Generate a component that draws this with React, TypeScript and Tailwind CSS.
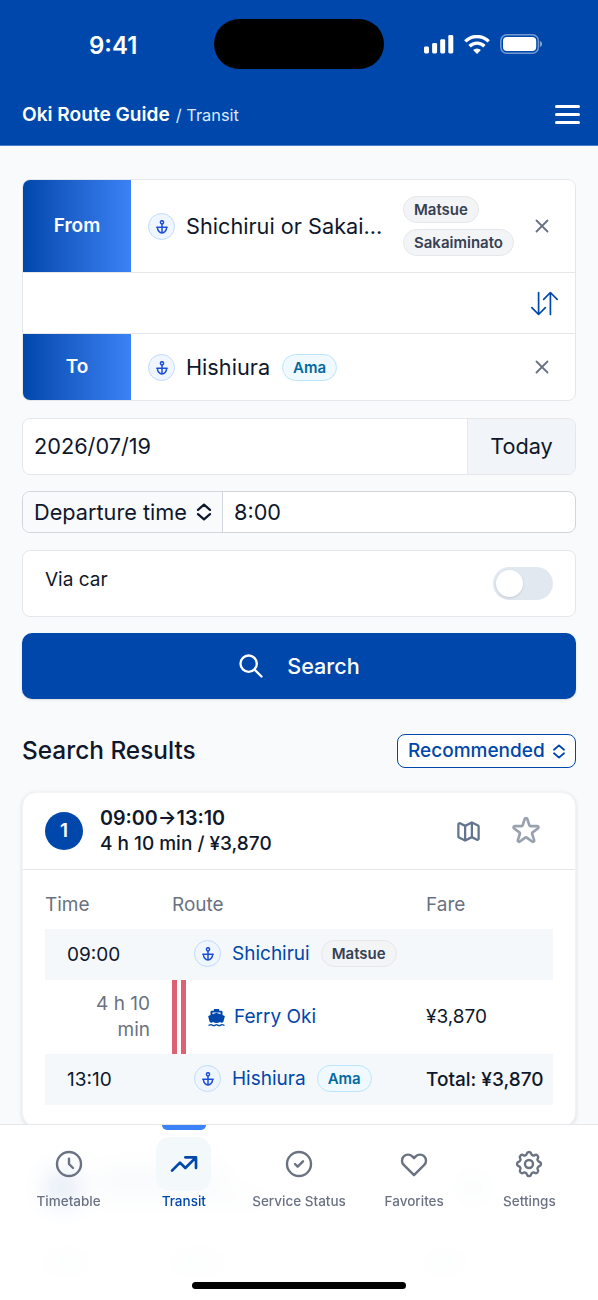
import type { ReactNode } from 'react';
import { BsArrowDownUp } from 'react-icons/bs';
import {
  HiOutlineCheckCircle,
  HiOutlineClock,
  HiOutlineCog,
  HiOutlineHeart,
  HiOutlineMap,
  HiOutlineSearch,
  HiOutlineStar,
  HiOutlineTrendingUp,
  HiOutlineX,
} from 'react-icons/hi';

const StatusBar = () => (
  <div className="relative h-[84px]">
    <div className="flex h-[88px] items-center justify-between pl-[89px] pr-[55px]">
      <span className="pt-[3px] text-[24px] font-semibold">9:41</span>
      <div className="flex items-center gap-[10px]">
        <svg width="31" height="19" viewBox="0 0 31 19" fill="currentColor">
          <rect x="1" y="11.5" width="5" height="7" rx="1.4" />
          <rect x="9.1" y="8" width="5" height="10.5" rx="1.4" />
          <rect x="17.2" y="4.2" width="5" height="14.3" rx="1.4" />
          <rect x="25.3" y="0" width="5" height="18.5" rx="1.4" />
        </svg>
        <svg width="26" height="19" viewBox="0 0 26 19" fill="none" stroke="currentColor" strokeWidth="3.4">
          <path d="M1.3 6.4a16.6 16.6 0 0 1 23.4 0" />
          <path d="M5.6 11.2a10.4 10.4 0 0 1 14.8 0" />
          <path d="M13 19l-3.9-3.9a5.6 5.6 0 0 1 7.8 0z" fill="currentColor" stroke="none" />
        </svg>
        <svg width="43" height="20" viewBox="0 0 43 20" fill="none">
          <rect x="0.8" y="0.8" width="37.6" height="18.4" rx="6" stroke="currentColor" strokeOpacity="0.45" strokeWidth="1.5" />
          <rect x="3" y="3" width="33.2" height="14" rx="4" fill="currentColor" />
          <path d="M40 7c2.8 1 2.8 5 0 6z" fill="currentColor" fillOpacity="0.5" />
        </svg>
      </div>
    </div>
    <div className="absolute left-[214px] top-[19px] h-[50px] w-[170px] rounded-full bg-black" />
  </div>
);

const PortIcon = () => (
  <span className="flex size-[27px] shrink-0 items-center justify-center rounded-full border border-[#bfdbfe] bg-[#eff6ff] pt-px text-[#1d4ed8]">
    <svg
      className="h-[14px] w-[12px]"
      viewBox="0 0 12 14"
      fill="none"
      stroke="currentColor"
      strokeWidth="1.5"
      strokeLinecap="round"
      strokeLinejoin="round"
    >
      <circle cx="6" cy="2.3" r="1.6" />
      <path d="M6 3.9V13M0.8 7.3h10.4M1.4 7.3a4.6 5.6 0 0 0 9.2 0" />
    </svg>
  </span>
);

const FerryIcon = () => (
  <svg className="h-[18px] w-[17px]" viewBox="0 0 50 54" fill="currentColor">
    <path d="M17 0h16v5h6a4 4 0 0 1 4 4v9l5 2c2 1 2 2 1.500 4l-4 15c-3 3-7 3-10 0-6 4-15 4-21 0-3 3-7 3-10 0L.5 24C0 22 0 21 2 20l5-2V9a4 4 0 0 1 4-4h6zM13 10.500v5l12-4 12 4v-5z" />
    <path
      d="M1 49c4 0 5.500-2 8-2s4 3 8 3 5.500-3 8-3 4 3 8 3 5.500-3 8-3 4 2 8 2"
      fill="none"
      stroke="currentColor"
      strokeWidth="4"
    />
  </svg>
);

const Badge = ({ children, blue = false }: { children: ReactNode; blue?: boolean }) => (
  <span
    className={`inline-flex h-[27px] w-fit items-center rounded-full border px-[10px] text-[15px] font-semibold leading-none ${
      blue ? 'border-[#bae6fd] bg-[#f0f9ff] text-[#0369a1]' : 'border-gray-200 bg-gray-100 text-gray-700'
    }`}
  >
    {children}
  </span>
);

const SelectArrows = ({ className }: { className?: string }) => (
  <svg
    className={className}
    viewBox="0 0 16 18"
    fill="none"
    stroke="currentColor"
    strokeWidth="2.2"
    strokeLinecap="round"
    strokeLinejoin="round"
  >
    <path d="M2 6.9L8 1.6l6 5.3M2 11.1l6 5.3 6-5.3" />
  </svg>
);

const RowLabel = ({ children }: { children: ReactNode }) => (
  <div className="flex w-[108px] shrink-0 items-center justify-center bg-linear-to-r from-[#0047ab] to-[#3b82f6] text-[19px] font-semibold text-white">
    {children}
  </div>
);

const SearchForm = () => (
  <form className="flex flex-col">
    <div className="h-[222px] overflow-hidden rounded-[8px] border border-gray-200 bg-white">
      <div className="flex h-[93px] border-b border-gray-200">
        <RowLabel>From</RowLabel>
        <div className="flex flex-1 items-center pl-[17px] pr-[22px]">
          <PortIcon />
          <span className="ml-[11px] w-[206px] whitespace-nowrap text-[21.7px]">Shichirui or Sakai...</span>
          <div className="ml-[11px] flex flex-col gap-[6px]">
            <Badge>Matsue</Badge>
            <Badge>Sakaiminato</Badge>
          </div>
          <HiOutlineX className="ml-auto size-[22px] text-gray-500" />
        </div>
      </div>
      <div className="flex h-[61px] items-center justify-end border-b border-gray-200 pr-[17px]">
        <BsArrowDownUp className="size-[27px] text-[#0047ab]" />
      </div>
      <div className="flex h-[66px]">
        <RowLabel>To</RowLabel>
        <div className="flex flex-1 items-center pl-[17px] pr-[22px]">
          <PortIcon />
          <span className="ml-[11px] mr-[12px] text-[21.7px]">Hishiura</span>
          <Badge blue>Ama</Badge>
          <HiOutlineX className="ml-auto size-[22px] text-gray-500" />
        </div>
      </div>
    </div>

    <div className="mt-[17px] flex h-[57px] overflow-hidden rounded-[8px] border border-gray-200 bg-white text-[21.7px]">
      <div className="flex flex-1 items-center pl-[11px]">2026/07/19</div>
      <div className="flex w-[108px] items-center justify-center border-l border-gray-200 bg-slate-100">Today</div>
    </div>

    <div className="mt-4 flex h-[42px] overflow-hidden rounded-[8px] border border-gray-300 bg-white text-[21.7px]">
      <div className="flex w-[200px] items-center justify-between border-r border-gray-300 bg-slate-50 pl-[11px] pr-[10px]">
        <span className="pt-px">Departure time</span>
        <SelectArrows className="h-[18px] w-[16px]" />
      </div>
      <div className="flex items-center pl-[11px] pt-px">8:00</div>
    </div>

    <div className="mt-[17px] flex h-[67px] justify-between rounded-[8px] border border-gray-200 bg-white px-[22px]">
      <span className="mt-[15px] text-[19px] leading-[28px]">Via car</span>
      <div className="mt-4 flex h-[33px] w-[60px] items-center rounded-full bg-slate-200 pl-[3px]">
        <div className="size-[27px] rounded-full bg-white shadow-sm" />
      </div>
    </div>

    <button
      type="button"
      className="mt-4 flex h-[66px] items-center justify-center gap-[22px] rounded-[10px] bg-[#0047ab] pr-px text-[21.6px] font-[450] text-white shadow-sm"
    >
      <HiOutlineSearch className="size-[28px]" />
      <span className="pt-px">Search</span>
    </button>
  </form>
);

const RouteTable = () => (
  <div className="px-[22px] text-[19px]">
    <div className="grid h-[59px] grid-cols-[127px_254px_1fr] items-center pt-[11px] text-gray-500">
      <span>Time</span>
      <span>Route</span>
      <span>Fare</span>
    </div>
    <div className="grid h-[51px] grid-cols-[127px_1fr] items-center bg-[#f5f8fa]">
      <span className="pl-[22px] pt-px">09:00</span>
      <div className="flex items-center pb-[2px] pl-[22px]">
        <PortIcon />
        <span className="ml-[11px] mr-[11px] pt-px text-[#0047ab]">Shichirui</span>
        <Badge>Matsue</Badge>
      </div>
    </div>
    <div className="grid h-[74px] grid-cols-[105px_22px_36px_218px_1fr] items-center">
      <span className="pl-6 text-right leading-[26px] text-gray-500">4 h 10 min</span>
      <span />
      <div className="h-[74px] w-[14px] border-x-[5px] border-[#dc6173]" />
      <div className="flex items-center gap-[9px] pt-px text-[#0047ab]">
        <FerryIcon />
        Ferry Oki
      </div>
      <span className="pt-px">¥3,870</span>
    </div>
    <div className="grid h-[51px] grid-cols-[127px_254px_1fr] items-center bg-[#f5f8fa]">
      <span className="pl-[22px] pt-px">13:10</span>
      <div className="flex items-center pb-[2px] pl-[22px]">
        <PortIcon />
        <span className="ml-[11px] mr-[11px] pt-px text-[#0047ab]">Hishiura</span>
        <Badge blue>Ama</Badge>
      </div>
      <span className="pt-px font-medium">Total: ¥3,870</span>
    </div>
  </div>
);

const ResultCard = () => (
  <article className="h-[335px] rounded-[14px] border border-gray-100 bg-white shadow-[0_1px_4px_rgba(0,0,0,0.12)]">
    <div className="flex h-[77px] items-center border-b border-gray-200 px-[22px]">
      <span className="flex size-[38px] items-center justify-center rounded-full bg-[#0047ab] text-[19px] font-semibold text-white">
        1
      </span>
      <div className="ml-[17px] pb-px text-[19px] font-medium leading-[26px]">
        <p className="text-[19.7px] font-semibold">09:00→13:10</p>
        <p>4 h 10 min / ¥3,870</p>
      </div>
      <HiOutlineMap className="ml-auto size-[27px] text-slate-500" />
      <HiOutlineStar className="ml-[28px] mr-[11px] size-[32px] text-gray-400" />
    </div>
    <RouteTable />
  </article>
);

// Next result, only seen through the frosted tab bar
const NextCard = () => (
  <div className="mt-[22px] h-[300px] rounded-[14px] bg-white px-[22px] pt-[20px]">
    <div className="flex items-center">
      <div className="size-[38px] rounded-full bg-[#0047ab]" />
      <div className="ml-[16px] flex flex-col gap-2">
        <div className="h-[13px] w-[126px] bg-slate-400" />
        <div className="h-[13px] w-[170px] bg-slate-300" />
      </div>
      <div className="ml-auto mr-[68px] size-[26px] bg-slate-300" />
    </div>
    <div className="mt-[48px] grid grid-cols-[127px_254px_1fr]">
      <div className="h-[14px] w-[44px] bg-slate-300" />
      <div className="h-[14px] w-[52px] bg-slate-300" />
      <div className="h-[14px] w-[40px] bg-slate-300" />
    </div>
  </div>
);

const tabs = [
  { label: 'Timetable', icon: HiOutlineClock },
  { label: 'Transit', icon: HiOutlineTrendingUp, active: true },
  { label: 'Service Status', icon: HiOutlineCheckCircle },
  { label: 'Favorites', icon: HiOutlineHeart },
  { label: 'Settings', icon: HiOutlineCog },
];

const TabBar = () => (
  <nav className="absolute inset-x-0 bottom-0 flex h-[176px] flex-col items-center justify-between border-t border-gray-200 bg-white/90 backdrop-blur-[12px]">
    <div className="grid w-full grid-cols-5 px-[11px]">
      {tabs.map(({ label, icon: Icon, active }) => (
        <div
          key={label}
          className={`flex flex-col items-center text-[13.5px] font-medium ${active ? 'text-[#0047ab]' : 'text-gray-500'}`}
        >
          <div className={`h-[5px] w-[44px] rounded-b-[6px] ${active ? 'bg-[#3b82f6]' : ''}`} />
          <div
            className={`mt-[7px] flex h-[54px] w-[55px] items-center justify-center rounded-[14px] ${
              active ? 'bg-[#f3f8fb]' : ''
            }`}
          >
            <Icon className={`size-[32px] ${active ? '' : '[&_path]:stroke-[1.8]'}`} />
          </div>
          <span className="whitespace-nowrap leading-[20px]">{label}</span>
        </div>
      ))}
    </div>
    <div className="mb-[11px] h-[7px] w-[214px] rounded-full bg-black" />
  </nav>
);

const App = () => {
  return (
    <div className="relative h-[1300px] w-[598px] overflow-hidden bg-slate-50 font-[Inter,sans-serif] text-slate-900">
      <header className="h-[146px] border-b border-[#4a7fc8] bg-[#0047ab] text-white">
        <StatusBar />
        <div className="flex h-[61px] items-center justify-between pl-[22px] pr-[18px]">
          <div className="flex items-baseline">
            <h1 className="text-[19.1px] font-semibold">Oki Route Guide</h1>
            <span className="ml-[6px] text-[16.4px] text-blue-100">/ Transit</span>
          </div>
          <div className="flex w-[25px] flex-col gap-[5px]">
            <span className="h-[3px] rounded-full bg-white" />
            <span className="h-[3px] rounded-full bg-white" />
            <span className="h-[3px] rounded-full bg-white" />
          </div>
        </div>
      </header>

      <main className="px-[22px] pt-[33px]">
        <SearchForm />
        <div className="mb-[24px] mt-[35px] flex h-[34px] items-center justify-between">
          <h2 className="pb-[2px] text-[24.4px] font-[450]">Search Results</h2>
          <div className="flex h-[34px] w-[179px] items-center justify-between rounded-[8px] border-[1.5px] border-[#0047ab] bg-white pl-[10px] pr-[9px] text-[19px] font-[450] text-[#0047ab]">
            <span className="pt-px">Recommended</span>
            <SelectArrows className="h-[15px] w-[14px]" />
          </div>
        </div>
        <ResultCard />
        <NextCard />
      </main>

      <TabBar />
    </div>
  );
};

export default App;
